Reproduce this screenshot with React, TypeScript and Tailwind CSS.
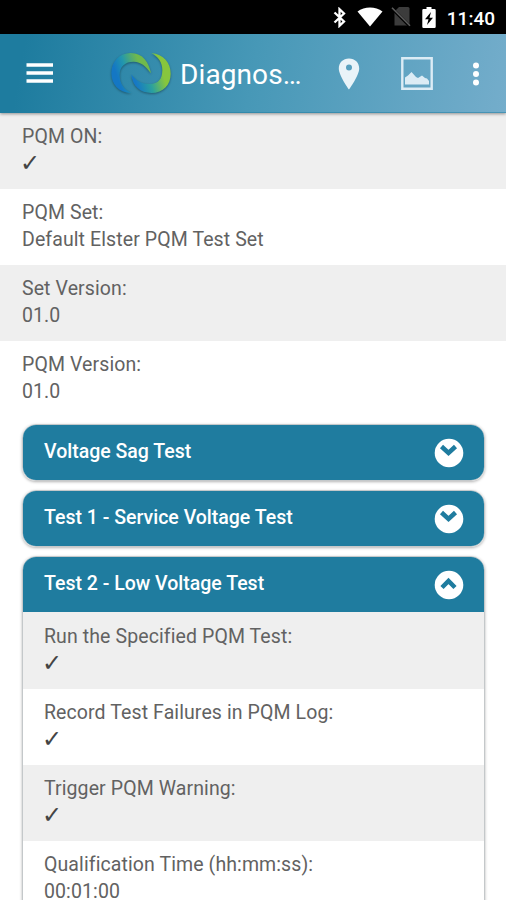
import clsx from "clsx";

type Field = { label: string; value: string };

const summary: Field[] = [
  { label: "PQM ON:", value: "✓" },
  { label: "PQM Set:", value: "Default Elster PQM Test Set" },
  { label: "Set Version:", value: "01.0" },
  { label: "PQM Version:", value: "01.0" },
];

const lowVoltage: Field[] = [
  { label: "Run the Specified PQM Test:", value: "✓" },
  { label: "Record Test Failures in PQM Log:", value: "✓" },
  { label: "Trigger PQM Warning:", value: "✓" },
  { label: "Qualification Time (hh:mm:ss):", value: "00:01:00" },
];

export default function App() {
  return (
    <div className="flex h-screen w-full flex-col overflow-hidden bg-white font-['Roboto',sans-serif] text-[#626262]">
      <StatusBar />
      <AppBar />
      <main className="min-h-0 flex-1 overflow-hidden">
        <FieldList fields={summary} className="px-[22px]" />
        <div className="flex flex-col gap-[9px] pt-[7px] pr-[21px] pl-[22px]">
          <Panel title="Voltage Sag Test" />
          <Panel title="Test 1 - Service Voltage Test" />
          <Panel title="Test 2 - Low Voltage Test" fields={lowVoltage} />
        </div>
      </main>
    </div>
  );
}

function StatusBar() {
  return (
    <div className="flex h-[34px] shrink-0 items-center justify-end bg-black pr-[11px] text-white">
      {/* bluetooth */}
      <svg width="14" height="21" viewBox="0 0 14 21" fill="none" stroke="#fff" strokeWidth="2.3" className="mr-[10px]">
        <path d="M1.5 5.5 11 14.5 6.5 18.8V2.2L11 6.5 1.5 15.5" />
      </svg>
      {/* wifi */}
      <svg width="26" height="20" viewBox="0 0 26 20" fill="#fff" className="mr-[8px]">
        <path d="M.5 4.5C7.5-.8 18.5-.8 25.5 4.5L13 19.5z" />
      </svg>
      {/* no sim */}
      <svg width="20" height="20" viewBox="0 0 20 20" className="mr-[11px]">
        <path d="M8 0h9q1.5 0 1.5 1.5v17h-15v-14z" fill="#3c3c3c" />
        <path d="M1 1.5 18.5 19" stroke="#000" strokeWidth="3" />
        <path d="M1 .8 19 18.8" stroke="#5c5c5c" strokeWidth="1.6" />
      </svg>
      {/* battery */}
      <svg width="14" height="21" viewBox="0 0 14 21" className="mr-[11px]">
        <path d="M4.5 0h5v2h3q1.2 0 1.2 1.2v16.6q0 1.2-1.2 1.2h-11Q.3 21 .3 19.8V3.2Q.3 2 1.5 2h3z" fill="#fff" />
        <path d="M9 5 3 12.3h3.5L5 18l6-7.3H7.5z" fill="#000" />
      </svg>
      <span className="pt-[2px] text-[19px] leading-none font-medium">11:40</span>
    </div>
  );
}

function AppBar() {
  return (
    <header className="relative z-10 flex h-[79px] shrink-0 items-center bg-linear-[100deg] from-[#1e7c9f] from-5% via-[#4798b7] via-50% to-[#74adcb] pl-[26px] text-white shadow-[inset_0_-1px_0_rgba(30,124,159,0.5),0_1px_3px_rgba(0,0,0,0.4)]">
      <svg width="28" height="20" viewBox="0 0 28 20" fill="#fff" className="mr-[56px] mb-[1px]">
        <path d="M.5.3H27v3.4H.5zM.5 8.3H27v3.4H.5zM.5 16.3H27v3.4H.5z" />
      </svg>
      <Logo />
      <h1 className="w-[126px] truncate pt-[3px] text-[28px] leading-[36px] tracking-[0.1px]">Diagnostics</h1>
      <svg width="22" height="32" viewBox="0 0 22 32" fill="#e9f3f8" className="ml-[32px]">
        <path
          fillRule="evenodd"
          d="M11 .5C5 .5.8 4.8.8 10.5.8 17.5 11 31.5 11 31.5s10.200-14 10.200-21C21.200 4.800 17 .5 11 .5zm0 6a3 3 0 1 1 0 6 3 3 0 0 1 0-6z"
        />
      </svg>
      <svg width="32" height="33" viewBox="0 0 32 33" className="ml-[41px]">
        <path d="M1.300 1.300h29.400v30.400H1.300z" fill="none" stroke="#dcecf5" strokeWidth="2.400" />
        <path d="M4 27.500v-7l3-2 3.500-3.500 4.500 5 2 1 4-2.500 3 2.500 2 .5 2 2.500v3.500z" fill="#dcecf5" />
      </svg>
      <svg width="8" height="24" viewBox="0 0 8 24" fill="#fff" className="ml-[39px]">
        <circle cx="4" cy="3.5" r="3" />
        <circle cx="4" cy="12" r="3" />
        <circle cx="4" cy="20.5" r="3" />
      </svg>
    </header>
  );
}

function Logo() {
  return (
    <svg
      width="63"
      height="47"
      viewBox="330 60 189 141"
      className="mr-[7px] drop-shadow-[0_1px_1px_rgba(0,0,0,0.35)]"
    >
      <defs>
        <linearGradient id="left" x1="0" y1=".65" x2="1" y2=".3">
          <stop offset=".15" stopColor="#1477c4" />
          <stop offset=".4" stopColor="#2397ad" />
          <stop offset=".75" stopColor="#70b94c" />
        </linearGradient>
        <linearGradient id="right" x1="0" y1=".75" x2="1" y2=".45">
          <stop offset=".1" stopColor="#1678c5" />
          <stop offset=".45" stopColor="#2ba19e" />
          <stop offset=".8" stopColor="#87c63d" />
        </linearGradient>
      </defs>
      <path
        d="M395 189C356 190 334 162 334 130C334 94 358 69 392 69C429 69 447 98 453 130C438 110 424 95 401 95C376 95 359 109 359 135C359 162 374 181 395 189Z"
        fill="url(#left)"
      />
      <path
        d="M394 133C397 169 421 189 454 189C490 189 512 164 512 131C512 98 491 73 454 69C475 81 487 96 487 121C487 147 475 162 449 162C423 162 407 151 394 133Z"
        fill="url(#right)"
      />
    </svg>
  );
}

function FieldList({ fields, className }: { fields: Field[]; className?: string }) {
  return (
    <dl className="text-[19.5px] leading-[27px] tracking-[0.1px]">
      {fields.map(({ label, value }) => (
        <div key={label} className={clsx("h-[76px] pt-[10px] odd:bg-[#efefef]", className)}>
          <dt>{label}</dt>
          <dd
            className={clsx(
              value === "✓" && "-ml-[2px] font-['DejaVu_Sans',sans-serif] text-[24px] text-[#444]",
            )}
          >
            {value}
          </dd>
        </div>
      ))}
    </dl>
  );
}

function Panel({ title, fields }: { title: string; fields?: Field[] }) {
  const open = !!fields;

  return (
    <section
      className={clsx(
        "overflow-hidden border border-[#c4c8ca] shadow-[0_1px_3px_rgba(0,0,0,0.3)]",
        open ? "rounded-t-[14px]" : "rounded-[14px]",
      )}
    >
      <div className="flex h-[55px] items-center justify-between bg-[#1f7c9f] pr-[20px] pl-[21px] text-white">
        <h2 className="pb-[3px] text-[19.5px] leading-[27px] font-medium">{title}</h2>
        <svg width="30" height="30" viewBox="0 0 30 30">
          <circle cx="15" cy="15" r="14.3" fill="#fff" />
          <path
            d={open ? "M8 17.5 14.5 11l6.5 6.5" : "M7.5 8.5 14.5 15l7-6.5"}
            fill="none"
            stroke="#1f7c9f"
            strokeWidth="4.5"
          />
        </svg>
      </div>
      {fields && <FieldList fields={fields} className="px-[21px] first:h-[77px] first:pt-[11px]" />}
    </section>
  );
}
